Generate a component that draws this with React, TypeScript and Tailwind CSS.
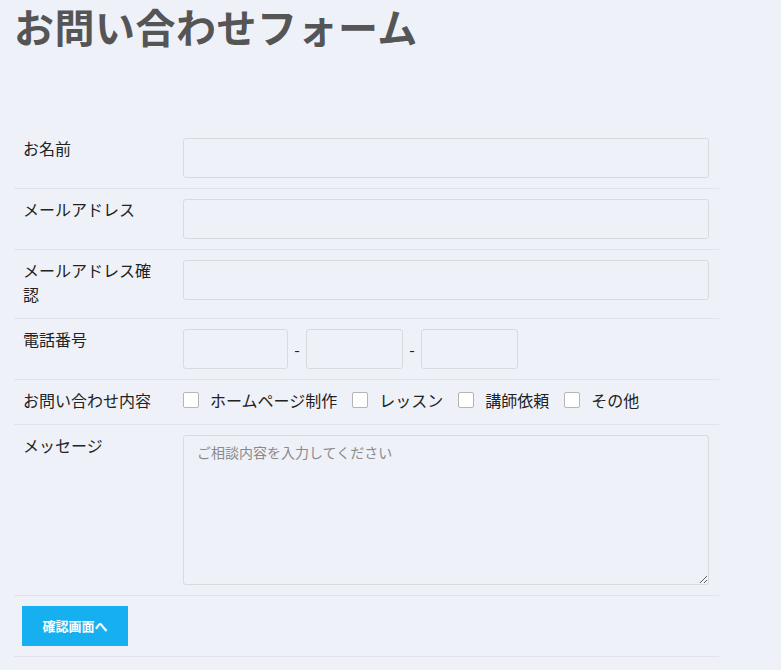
import React from "react";

const sans = { fontFamily: '"Noto Sans CJK JP", "Noto Sans", sans-serif' };

function Row({ label, children, tight }: { label?: React.ReactNode; children: React.ReactNode; tight?: boolean }) {
  return (
    <div className="flex border-b border-[#e2e3ea]">
      <div className="w-[159px] shrink-0 pl-[9px] pr-[10px] pt-[8px] pb-[12px] text-[16px] leading-[24px] text-[#222]">
        {label}
      </div>
      <div className={tight ? "flex-1 px-[10px] pt-[8px] pb-[12px]" : "flex-1 p-[10px]"}>{children}</div>
    </div>
  );
}

function Check({ label }: { label: string }) {
  return (
    <label className="flex items-center">
      <span className="h-[16px] w-[16px] rounded-[2px] border border-[#b5b5b5] bg-white" />
      <span className="ml-[11px] text-[16px] leading-[24px] text-[#222]">{label}</span>
    </label>
  );
}

export default function App() {
  const input = "h-[40px] rounded-[3px] border border-[#d9dae0] bg-transparent";
  return (
    <div className="min-h-[670px] bg-[#eff1f9] pl-[14px]" style={sans}>
      <h1
        className="pt-[6px] text-[40px] font-bold leading-[48px] tracking-[0.5px] text-[#555]"
        style={{ fontFamily: '"Liberation Serif", "Noto Sans CJK JP", serif' }}
      >
        お問い合わせフォーム
      </h1>
      <div className="mt-[74px] w-[705px]">
        <Row label="お名前">
          <div className={`${input} w-full`} />
        </Row>
        <Row label="メールアドレス">
          <div className={`${input} w-full`} />
        </Row>
        <Row label="メールアドレス確認">
          <div className={`${input} w-full`} />
        </Row>
        <Row label="電話番号">
          <div className="flex items-center">
            <div className={`${input} w-[105px]`} />
            <span className="w-[18px] text-center text-[16px] text-[#222]">-</span>
            <div className={`${input} w-[97px]`} />
            <span className="w-[18px] text-center text-[16px] text-[#222]">-</span>
            <div className={`${input} w-[97px]`} />
          </div>
        </Row>
        <Row label="お問い合わせ内容" tight>
          <div className="flex items-center gap-[15px]">
            <Check label="ホームページ制作" />
            <Check label="レッスン" />
            <Check label="講師依頼" />
            <Check label="その他" />
          </div>
        </Row>
        <Row label="メッセージ">
          <textarea
            className="block h-[150px] w-full resize-y rounded-[3px] border border-[#d9dae0] bg-transparent px-[13px] py-[5px] text-[14px] leading-[22px] text-[#333] placeholder:text-[#8a8a8a] outline-none"
            placeholder="ご相談内容を入力してください"
            style={sans}
          />
        </Row>
        <div className="flex border-b border-[#e2e3ea] py-[10px] pl-[8px]">
          <button className="h-[40px] w-[106px] bg-[#16b0f0] text-[13px] font-bold text-white">
            確認画面へ
          </button>
        </div>
      </div>
    </div>
  );
}
